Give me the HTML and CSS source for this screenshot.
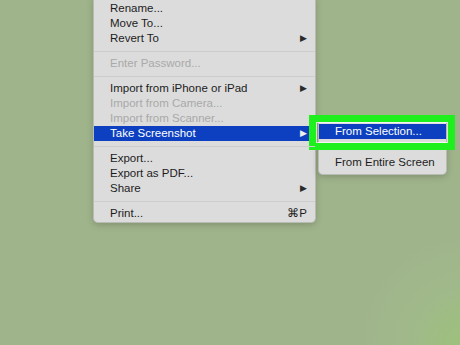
FILE: index.html
```html
<!DOCTYPE html>
<html lang="en">
<head>
    <meta charset="UTF-8">
    <title>File Menu</title>
    <meta name="viewport" content="width=device-width, initial-scale=1">
    <link rel="stylesheet" href="styles.css">
</head>
<body>
    <div class="desktop">
        <div class="menu">
            <div class="item">Rename...</div>
            <div class="item">Move To...</div>
            <div class="item has-sub">Revert To<span class="arrow">&#9654;</span></div>
            <div class="sep"></div>
            <div class="item disabled">Enter Password...</div>
            <div class="sep"></div>
            <div class="item has-sub">Import from iPhone or iPad<span class="arrow">&#9654;</span></div>
            <div class="item disabled">Import from Camera...</div>
            <div class="item disabled">Import from Scanner...</div>
            <div class="item active has-sub">Take Screenshot<span class="arrow">&#9654;</span>
                <!-- 子菜单 -->
                <div class="submenu">
                    <div class="item active">From Selection...</div>
                    <div class="gap"></div>
                    <div class="item">From Entire Screen</div>
                </div>
                <div class="callout"></div>
            </div>
            <div class="sep"></div>
            <div class="item">Export...</div>
            <div class="item">Export as PDF...</div>
            <div class="item has-sub">Share<span class="arrow">&#9654;</span></div>
            <div class="sep"></div>
            <div class="item">Print...<span class="key">&#8984;P</span></div>
        </div>
    </div>
</body>
</html>
```

FILE: styles.css
```css
html, body {
    margin: 0;
    height: 100%;
}
body {
    font-family: "Liberation Sans", Arial, sans-serif;
    background: radial-gradient(circle at 470px 345px, #9cc27a 0, #a0b98a 60px, #a0b48c 110px), #a0b48c;
    overflow: hidden;
}
.desktop {
    padding-left: 93px;
}
.menu {
    width: 223px;
    margin-top: -3px;
    padding: 4px 0 1px 0;
    background: #dcdcdc;
    border: 1px solid #b9bcb4;
    border-top: none;
    border-radius: 0 0 5px 5px;
    box-shadow: 0 2px 6px rgba(40, 50, 30, 0.25);
    box-sizing: border-box;
}
.item {
    position: relative;
    height: 15px;
    line-height: 15px;
    padding-left: 16px;
    padding-right: 10px;
    font-size: 11.5px;
    color: #1c1c1c;
    white-space: nowrap;
}
.item.disabled {
    color: #a9a9a9;
}
.item.active {
    background: #0d40c0;
    color: #fff;
}
.arrow {
    position: absolute;
    right: 8px;
    top: 0;
    font-size: 9px;
    color: #2a2a2a;
}
.item.active .arrow {
    color: #f0f0f0;
}
.key {
    position: absolute;
    right: 8px;
    top: 0;
}
.sep {
    height: 10px;
    position: relative;
}
.sep::after {
    content: "";
    position: absolute;
    left: 0;
    right: 0;
    top: 5px;
    height: 1px;
    background: #cdcdcd;
}
.submenu {
    position: absolute;
    left: 224px;
    top: -6px;
    width: 129px;
    padding: 4px 0;
    background: #dcdcdc;
    border-radius: 0 0 5px 5px;
    box-shadow: 0 2px 6px rgba(40, 50, 30, 0.25);
    border: 1px solid #b9bcb4;
    border-top: none;
    box-sizing: border-box;
}
.submenu .item {
    padding-left: 16px;
}
.submenu .gap {
    height: 16px;
}
.callout {
    position: absolute;
    left: 215px;
    top: -11px;
    width: 146px;
    height: 35px;
    border: 7px solid #1ef01e;
    box-sizing: border-box;
}
.callout::after {
    content: "";
    position: absolute;
    inset: 0;
    border: 1px solid rgba(255, 255, 255, 0.7);
}
```
